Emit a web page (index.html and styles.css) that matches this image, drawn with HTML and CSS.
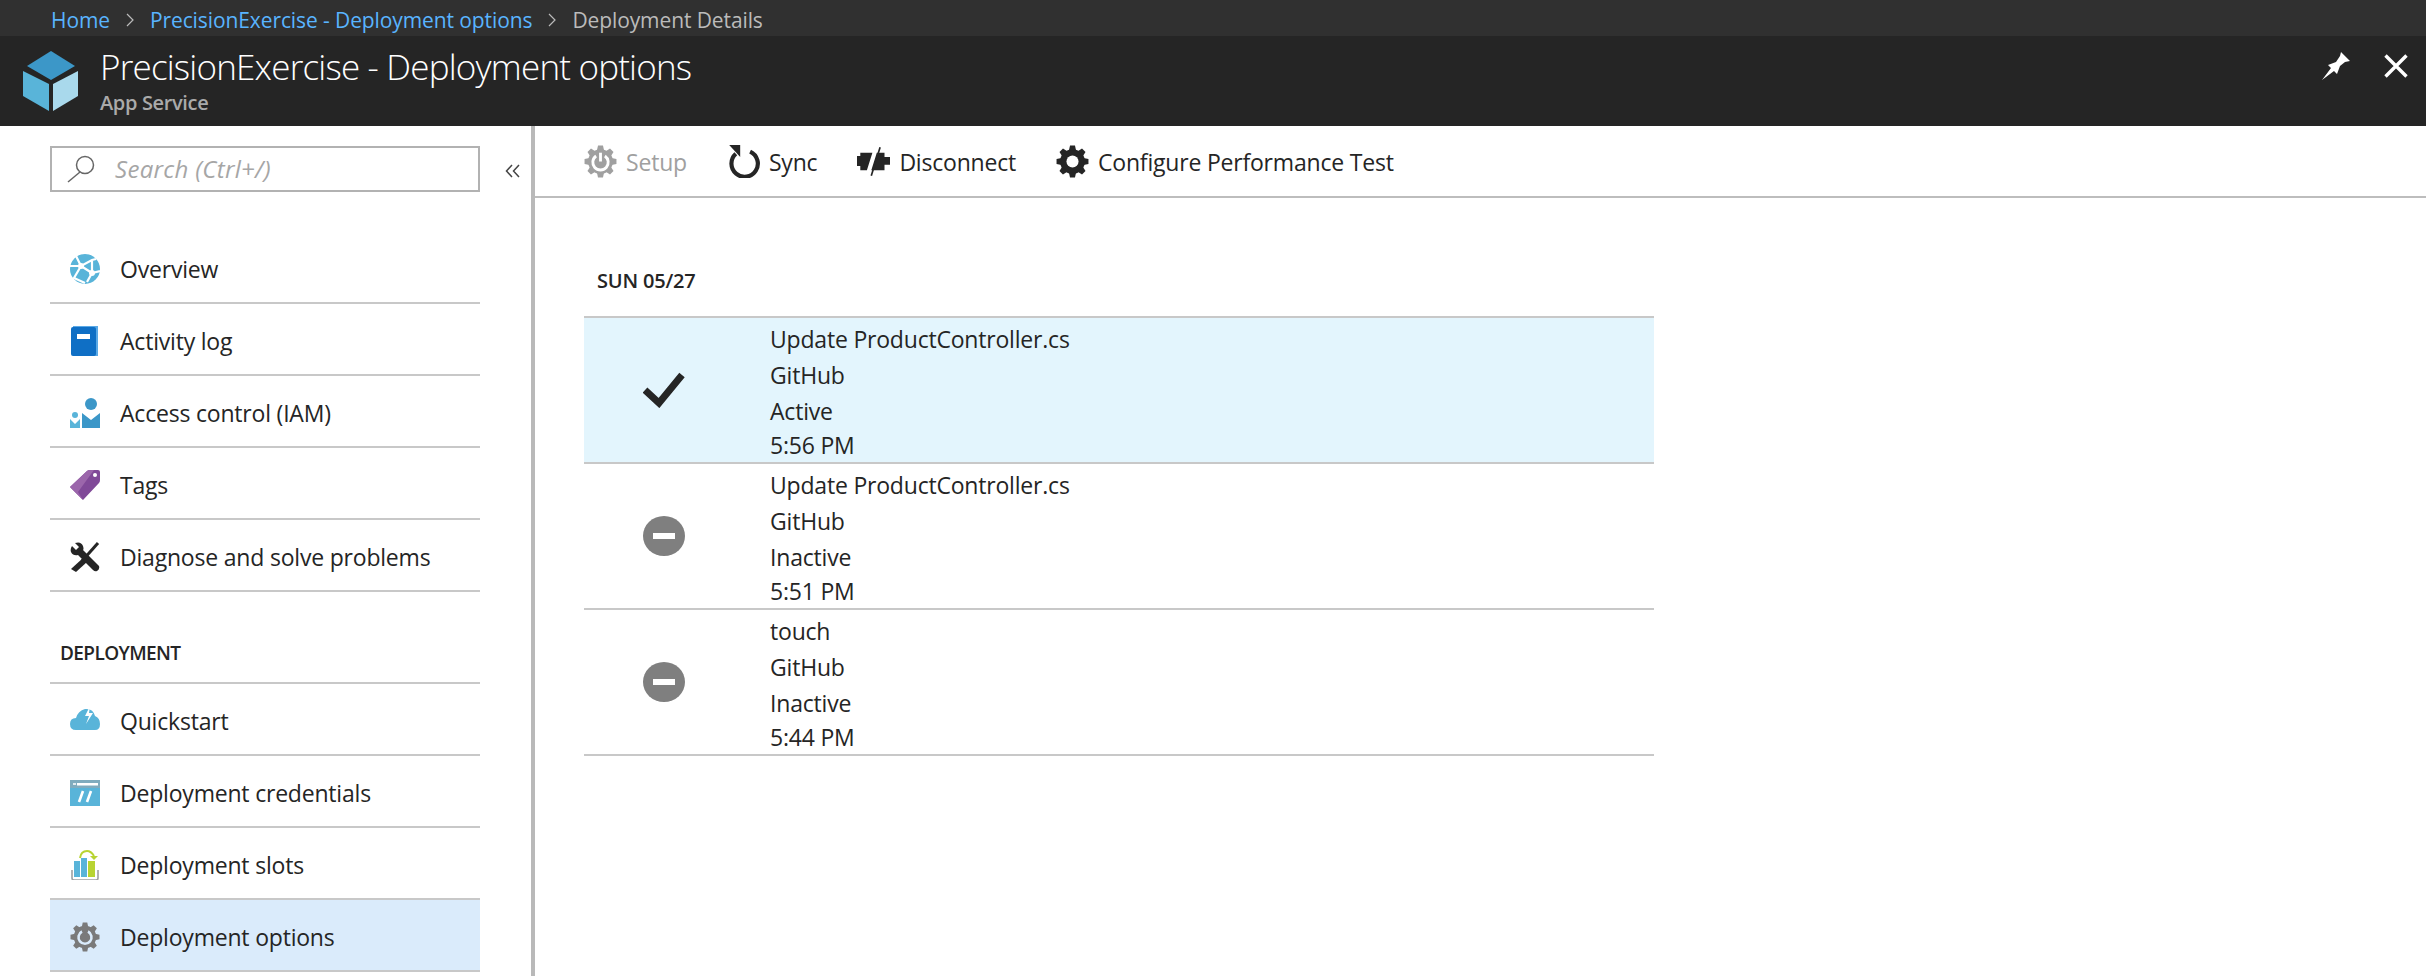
FILE: index.html
```html
<!DOCTYPE html>
<html lang="en">
<head>
  <meta charset="UTF-8" />
  <title>Deployment Details</title>
  <link rel="stylesheet" href="styles.css">
</head>
<body>
<svg class="defs" width="0" height="0">
  <symbol id="gear" viewBox="0 0 24 24">
    <circle cx="12" cy="12" r="9" />
    <path d="M9.4 4 L10.2 .4 H13.8 L14.6 4 Z" />
    <path d="M9.4 4 L10.2 .4 H13.8 L14.6 4 Z" transform="rotate(45 12 12)" />
    <path d="M9.4 4 L10.2 .4 H13.8 L14.6 4 Z" transform="rotate(90 12 12)" />
    <path d="M9.4 4 L10.2 .4 H13.8 L14.6 4 Z" transform="rotate(135 12 12)" />
    <path d="M9.4 4 L10.2 .4 H13.8 L14.6 4 Z" transform="rotate(180 12 12)" />
    <path d="M9.4 4 L10.2 .4 H13.8 L14.6 4 Z" transform="rotate(225 12 12)" />
    <path d="M9.4 4 L10.2 .4 H13.8 L14.6 4 Z" transform="rotate(270 12 12)" />
    <path d="M9.4 4 L10.2 .4 H13.8 L14.6 4 Z" transform="rotate(315 12 12)" />
  </symbol>
</svg>

<div class="breadcrumb">
  <a href="#">Home</a>
  <span class="crumb-sep"><svg viewBox="0 0 8 14"><path d="M1 1 L7 7 L1 13" fill="none" stroke="#bbb" stroke-width="1.2" /></svg></span>
  <a href="#">PrecisionExercise - Deployment options</a>
  <span class="crumb-sep"><svg viewBox="0 0 8 14"><path d="M1 1 L7 7 L1 13" fill="none" stroke="#bbb" stroke-width="1.2" /></svg></span>
  <span class="crumb-current">Deployment Details</span>
</div>

<header class="blade-header">
  <svg class="logo" viewBox="0 0 55 60">
    <path d="M28 0 L52 15 L28 29 L4 15 Z" fill="#3c97c8" />
    <path d="M0 20 L26 33 V60 L0 45 Z" fill="#59b4d9" />
    <path d="M55 20 L30 33 V60 L55 45 Z" fill="#a9d9ec" />
  </svg>
  <div class="blade-titles">
    <h1>PrecisionExercise - Deployment options</h1>
    <p>App Service</p>
  </div>
  <svg class="pin" viewBox="0 0 28 28">
    <path d="M0 28 L9 16 L6 13 L14 10 L18 4 L19 0 L28 9 L23 10 L18 14 L15 22 L12 19 Z" fill="#fff" />
  </svg>
  <svg class="close" viewBox="0 0 24 24">
    <path d="M1.5 1.5 L22.5 22.5 M22.5 1.5 L1.5 22.5" stroke="#fff" stroke-width="3.4" />
  </svg>
</header>

<div class="blade-body">
  <aside class="sidebar">
    <div class="search-row">
      <div class="search">
        <svg class="search-icon" viewBox="0 0 28 28">
          <circle cx="18" cy="10" r="8.5" fill="none" stroke="#666" stroke-width="1.5" />
          <path d="M13 17 L1 27" stroke="#666" stroke-width="1.5" />
        </svg>
        <span class="search-text">Search (Ctrl+/)</span>
      </div>
      <svg class="collapse" viewBox="0 0 16 16">
        <path d="M7 2 L1.5 8 L7 14 M14 2 L8.5 8 L14 14" fill="none" stroke="#444" stroke-width="1.5" />
      </svg>
    </div>

    <nav>
      <a class="nav-item" href="#">
        <svg viewBox="0 0 30 30">
          <circle cx="15" cy="15" r="15" fill="#59b4d9" />
          <path d="M6 2 L11 12 L22 6 L26 5 M11 12 L4 24 L15 29 M11 12 L22 19 L30 17 M22 19 L17 28 M22 6 L22 19 M0 12 L11 12" fill="none" stroke="#fff" stroke-width="2.2" />
          <circle cx="11" cy="12" r="3" fill="#fff" />
          <circle cx="22" cy="19" r="3" fill="#fff" />
        </svg>
        Overview
      </a>
      <a class="nav-item" href="#">
        <svg viewBox="0 0 30 30">
          <path d="M3 0 H28 V30 H3 Z" fill="#5aa9e6" />
          <rect x="1" y="1" width="25" height="29" rx="2" fill="#0f6fc5" />
          <rect x="7" y="8" width="13" height="5" fill="#fff" />
        </svg>
        Activity log
      </a>
      <a class="nav-item" href="#">
        <svg viewBox="0 0 30 30">
          <circle cx="21" cy="6" r="6" fill="#3c97c8" />
          <path d="M12 15 L21 22 L30 15 V30 H12 Z" fill="#3c97c8" />
          <circle cx="5" cy="17" r="3" fill="#59b4d9" />
          <path d="M0 21 L5 26 L10 21 V30 H0 Z" fill="#59b4d9" />
        </svg>
        Access control (IAM)
      </a>
      <a class="nav-item" href="#">
        <svg viewBox="0 0 30 30">
          <path d="M0 17 L17 1 Q18 0 20 0 H28 Q30 0 30 2 V10 Q30 12 29 13 L13 30 Z" fill="#804998" />
          <path d="M0 17 L17 1 Q18 0 20 0 H24 L8 22 L13 30 Z" fill="#9b66ab" />
          <circle cx="25" cy="5" r="2" fill="#fff" />
        </svg>
        Tags
      </a>
      <a class="nav-item" href="#">
        <svg viewBox="0 0 30 30">
          <path d="M28 1 L12 19" stroke="#252525" stroke-width="3" fill="none" />
          <path d="M13 16 L17 20 L6 30 L1 27 Z" fill="#252525" />
          <path d="M2 4 L6 8 L9 5 L5 1 Q11 -1 13 4 Q14 7 13 8 L29 24 Q30 27 27 29 Q25 30 23 28 L8 13 Q3 14 1 10 Q0 7 2 4 Z" fill="#252525" />
        </svg>
        Diagnose and solve problems
      </a>
    </nav>

    <h3 class="nav-heading">DEPLOYMENT</h3>

    <nav>
      <a class="nav-item" href="#">
        <svg viewBox="0 0 30 30">
          <path d="M6 24 Q0 24 0 18 Q0 12 6 12 Q8 5 15 3 Q23 2 25 10 Q30 12 30 18 Q30 24 25 24 Z" fill="#59b4d9" />
          <path d="M20 0 L15 10 H19 L16 18 L23 7 H19 Z" fill="#fff" />
        </svg>
        Quickstart
      </a>
      <a class="nav-item" href="#">
        <svg viewBox="0 0 30 30">
          <rect y="2" width="30" height="26" fill="#59b4d9" />
          <rect y="2" width="30" height="8" fill="#a0a5a8" opacity=".55" />
          <rect x="7" y="5" width="21" height="2.5" fill="#fff" />
          <path d="M3 6 H6" stroke="#fff" stroke-width="1.5" />
          <path d="M13 13 L9 24 M21 13 L17 24" stroke="#fff" stroke-width="2.6" />
        </svg>
        Deployment credentials
      </a>
      <a class="nav-item" href="#">
        <svg viewBox="0 0 30 30">
          <path d="M2 20 V28 Q2 30 4 30 H26 Q28 30 28 28 V20" fill="none" stroke="#a0a1a2" stroke-width="1.6" />
          <rect x="4" y="11" width="6" height="16" fill="#59b4d9" />
          <rect x="11" y="8" width="6" height="19" fill="#59b4d9" />
          <rect x="18" y="11" width="7" height="16" fill="#b8d432" />
          <path d="M10 8 Q11 1 17 1 Q21 1 24 6" fill="none" stroke="#b8d432" stroke-width="2" />
          <path d="M20 6 H28 L24 10 Z" fill="#b8d432" />
        </svg>
        Deployment slots
      </a>
      <a class="nav-item nav-item-active" href="#">
        <svg viewBox="0 0 30 30">
          <use href="#gear" fill="#7a7a7a" />
          <path d="M12 9.5 A6.5 6.5 0 1 0 18 9.5" fill="none" stroke="#daebfb" stroke-width="2.6" />
        </svg>
        Deployment options
      </a>
    </nav>
  </aside>

  <main class="content">
    <div class="toolbar">
      <button class="tool tool-disabled">
        <svg viewBox="0 0 30 30">
          <use href="#gear" fill="#a0a0a0" />
          <path d="M11 10 A7 7 0 1 0 19 10" fill="none" stroke="#fff" stroke-width="2.6" />
          <path d="M15 7 V15" stroke="#fff" stroke-width="2.6" />
        </svg>
        Setup
      </button>
      <button class="tool">
        <svg viewBox="0 0 30 30">
          <path d="M8 8 A12 12 0 1 0 21 6" fill="none" stroke="#252525" stroke-width="3.8" />
          <path d="M2 0 H12 V11 Z" fill="#252525" />
        </svg>
        Sync
      </button>
      <button class="tool">
        <svg viewBox="0 0 30 30">
          <path d="M0 10 H3 V7 H14 L9 23 H3 V19 H0 Z" fill="#252525" />
          <path d="M18 7 H25 V11 H30 V18 H25 V23 H13 Z" fill="#252525" />
          <path d="M13 28 L21 2" stroke="#252525" stroke-width="1.5" />
        </svg>
        Disconnect
      </button>
      <button class="tool">
        <svg viewBox="0 0 30 30">
          <use href="#gear" fill="#252525" />
          <circle cx="15" cy="15" r="5.5" fill="#fff" />
        </svg>
        Configure Performance Test
      </button>
    </div>

    <section class="deployments">
      <h2>SUN 05/27</h2>
      <div class="deploy-list">
        <div class="deploy deploy-active">
          <div class="deploy-status">
            <svg class="check" viewBox="0 0 42 36">
              <path d="M2 18 L16 31 L39 3" fill="none" stroke="#252525" stroke-width="7" />
            </svg>
          </div>
          <div class="deploy-info">
            <div>Update ProductController.cs</div>
            <div>GitHub</div>
            <div>Active</div>
            <div class="deploy-time">5:56 PM</div>
          </div>
        </div>
        <div class="deploy">
          <div class="deploy-status"><span class="stopped"></span></div>
          <div class="deploy-info">
            <div>Update ProductController.cs</div>
            <div>GitHub</div>
            <div>Inactive</div>
            <div class="deploy-time">5:51 PM</div>
          </div>
        </div>
        <div class="deploy">
          <div class="deploy-status"><span class="stopped"></span></div>
          <div class="deploy-info">
            <div>touch</div>
            <div>GitHub</div>
            <div>Inactive</div>
            <div class="deploy-time">5:44 PM</div>
          </div>
        </div>
      </div>
    </section>
  </main>
</div>
</body>
</html>
```

FILE: styles.css
```css
* {
  box-sizing: border-box;
}
html, body {
  height: 100%;
}
body {
  margin: 0;
  display: flex;
  flex-direction: column;
  overflow: hidden;
  background: #fff;
  color: #252525;
  font-family: "Open Sans", "Noto Sans", Arial, sans-serif;
  font-size: 23px;
  letter-spacing: -0.2px;
}
a {
  color: inherit;
  text-decoration: none;
}
.defs {
  position: absolute;
}

.breadcrumb {
  height: 36px;
  flex: none;
  display: flex;
  align-items: center;
  padding: 3px 0 0 51px;
  background: #303030;
  color: #59b4ff;
  font-size: 21px;
  letter-spacing: -0.1px;
}
.crumb-sep {
  width: 40px;
  display: flex;
  justify-content: center;
}
.crumb-sep svg {
  width: 8px;
  height: 14px;
}
.crumb-current {
  color: #bbb;
}

.blade-header {
  height: 90px;
  flex: none;
  display: flex;
  align-items: center;
  background: #252525;
  color: #fff;
}
.logo {
  width: 55px;
  height: 60px;
  margin-left: 23px;
  margin-right: 22px;
}
.blade-titles {
  flex: 1;
  padding-bottom: 3px;
}
.blade-titles h1 {
  margin: 0;
  font-size: 35px;
  line-height: 46px;
  font-weight: 300;
  letter-spacing: -0.8px;
}
.blade-titles p {
  margin: 0;
  font-size: 20px;
  line-height: 26px;
  font-weight: 600;
  letter-spacing: -0.35px;
  color: #aaa;
}
.pin {
  width: 28px;
  height: 28px;
  margin-right: 34px;
  margin-bottom: 30px;
}
.close {
  width: 24px;
  height: 24px;
  margin-right: 18px;
  margin-bottom: 30px;
}

.blade-body {
  flex: 1;
  display: flex;
  min-height: 0;
}

.sidebar {
  width: 535px;
  flex: none;
  padding: 20px 0 0 50px;
  border-right: 4px solid #b9b9b9;
}
.search-row {
  display: flex;
  align-items: center;
  margin-bottom: 40px;
}
.search {
  width: 430px;
  height: 46px;
  display: flex;
  align-items: center;
  gap: 20px;
  padding-left: 15px;
  border: 2px solid #b2b2b2;
  color: #a6a6a6;
  font-size: 24px;
  font-style: italic;
  letter-spacing: 0.3px;
}
.search-text {
  padding-bottom: 2px;
}
.search-icon {
  width: 28px;
  height: 28px;
}
.collapse {
  width: 16px;
  height: 16px;
  margin-left: 25px;
  margin-top: 4px;
}
.sidebar nav {
  width: 430px;
}
.nav-item {
  height: 72px;
  display: flex;
  align-items: center;
  gap: 20px;
  padding: 4px 0 0 20px;
  border-bottom: 2px solid #c8c8c8;
}
.nav-item svg {
  width: 30px;
  height: 30px;
  flex: none;
}
.nav-item-active {
  background: #daebfb;
}
.nav-heading {
  height: 92px;
  margin: 0;
  width: 430px;
  padding: 47px 0 0 10px;
  border-bottom: 2px solid #c8c8c8;
  font-size: 19px;
  line-height: 28px;
  font-weight: 600;
  letter-spacing: -0.6px;
}

.content {
  flex: 1;
}
.toolbar {
  height: 72px;
  display: flex;
  align-items: center;
  gap: 40px;
  padding: 1px 0 0 49px;
  border-bottom: 2px solid #bdbdbd;
}
.tool {
  display: flex;
  align-items: center;
  gap: 9px;
  padding: 0;
  border: none;
  background: none;
  color: #252525;
  font: inherit;
  letter-spacing: inherit;
}
.tool svg {
  width: 33px;
  height: 33px;
}
.tool-disabled {
  color: #a0a0a0;
}

.deployments {
  width: 1119px;
  padding: 66px 0 0 49px;
}
.deployments h2 {
  margin: 0 0 18px;
  padding-left: 13px;
  font-size: 20px;
  line-height: 34px;
  font-weight: 600;
  letter-spacing: -0.2px;
}
.deploy-list {
  border-top: 2px solid #c8c8c8;
}
.deploy {
  height: 146px;
  display: flex;
  border-bottom: 2px solid #c8c8c8;
}
.deploy-active {
  background: #e3f5fd;
}
.deploy-status {
  width: 159px;
  margin-right: 27px;
  display: flex;
  align-items: center;
  justify-content: center;
}
.check {
  width: 42px;
  height: 36px;
}
.stopped {
  position: relative;
  width: 42px;
  height: 40px;
  border-radius: 50%;
  background: #7f7f7f;
}
.stopped::after {
  content: "";
  position: absolute;
  left: 10px;
  right: 10px;
  top: 17px;
  height: 6px;
  background: #fff;
}
.deploy-info {
  padding-top: 3px;
  line-height: 36px;
}
.deploy-time {
  margin-top: -2px;
}
```
